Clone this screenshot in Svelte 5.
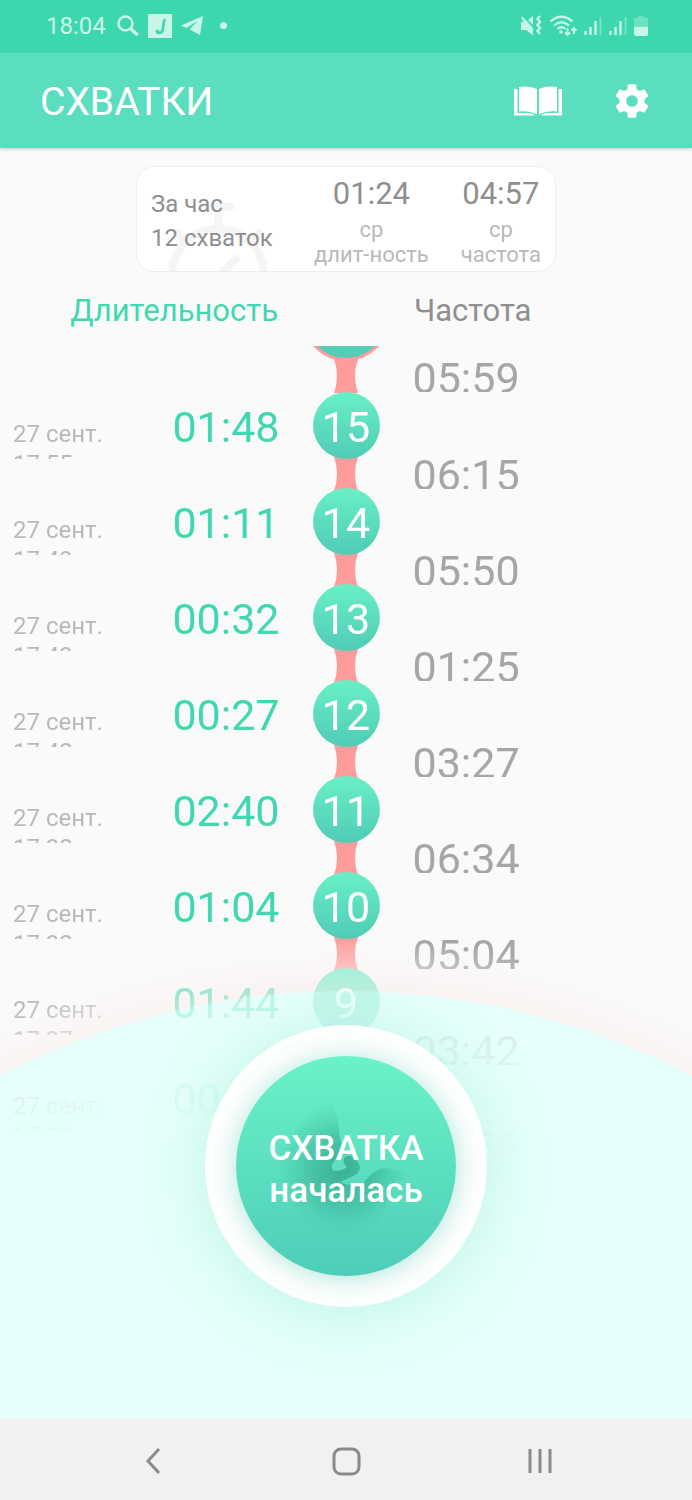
<script lang="ts">
type Contraction = {
	id: number;
	date?: string;
	duration?: string;
	frequency: string;
};

const contractions: Contraction[] = [
	{ id: 16, frequency: '05:59' },
	{ id: 15, date: '27 сент. 17:55', duration: '01:48', frequency: '06:15' },
	{ id: 14, date: '27 сент. 17:49', duration: '01:11', frequency: '05:50' },
	{ id: 13, date: '27 сент. 17:43', duration: '00:32', frequency: '01:25' },
	{ id: 12, date: '27 сент. 17:42', duration: '00:27', frequency: '03:27' },
	{ id: 11, date: '27 сент. 17:38', duration: '02:40', frequency: '06:34' },
	{ id: 10, date: '27 сент. 17:32', duration: '01:04', frequency: '05:04' },
	{ id: 9, date: '27 сент. 17:27', duration: '01:44', frequency: '03:42' },
	{ id: 8, date: '27 сент. 17:23', duration: '00:48', frequency: '05:56' },
];

const stats = [
	{ value: '01:24', label: 'длит-ность' },
	{ value: '04:57', label: 'частота' },
];
</script>

{#snippet signal()}
	<svg width="18" height="20" viewBox="0 0 18 20" aria-hidden="true">
		<path d="M1.5 15v4M6.5 11v8M11.5 5v14" stroke="currentColor" stroke-width="2.4" />
		<path d="M16.5 1v18" stroke="currentColor" stroke-width="2" opacity=".4" />
	</svg>
{/snippet}

<div class="screen">
	<div class="status-bar">
		<span class="clock">18:04</span>
		<svg width="24" height="24" viewBox="0 0 24 24" aria-hidden="true">
			<circle cx="9.5" cy="9.5" r="7" fill="none" stroke="currentColor" stroke-width="2.6" />
			<path d="M14.5 14.5l7 6.5" stroke="currentColor" stroke-width="3.6" />
		</svg>
		<svg width="24" height="24" viewBox="0 0 24 24" aria-hidden="true">
			<path fill="currentColor" d="M0 0h24v24H0z" />
			<path d="M17 5c-3 4 0 14-5.500 14-1.500 0-2-.500-2-1" fill="none" stroke="#3cd7af" stroke-width="2.600" />
			<circle cx="9.500" cy="17.500" r="2" fill="#3cd7af" />
		</svg>
		<svg width="24" height="22" viewBox="0 0 24 22" aria-hidden="true">
			<path fill="currentColor" d="M23 1L1 10.500l5.500 2.500L18 5.500 9.500 14.500 20 20z" />
		</svg>
		<span class="dot"></span>

		<div class="status-right">
			<svg width="22" height="22" viewBox="0 0 22 22" aria-hidden="true">
				<path fill="currentColor" d="M1 7h3L1 3l1.500-1.500L13 13v7.500L6 15H1zM8 5l5-4v9z" />
				<path d="M20 1l-2.500 3 2.500 3-2.500 3 2.500 3-2.500 3 2.500 3" fill="none" stroke="currentColor" stroke-width="2.400" />
			</svg>
			<svg width="28" height="22" viewBox="0 0 28 22" aria-hidden="true">
				<path d="M1.500 6.500q11-9.500 22 0M5 10.500q7.500-6.500 15 0M8.500 14q4-3.500 8 0" fill="none" stroke="currentColor" stroke-width="2.200" />
				<circle cx="12" cy="17" r="1.800" fill="currentColor" />
				<path d="M18.500 13v7M16 17.500l2.500 2.500 2.500-2.500M25 19v-6M22.500 15.500L25 13l2.500 2.500" fill="none" stroke="currentColor" stroke-width="1.800" />
			</svg>
			{@render signal()}
			{@render signal()}
			<svg width="14" height="20" viewBox="0 0 14 20" aria-hidden="true">
				<path d="M4 0h6v2h4v9H0V2h4z" fill="currentColor" opacity=".35" />
				<path d="M0 11h14v7q0 2-2 2H2q-2 0-2-2z" fill="currentColor" />
			</svg>
		</div>
	</div>

	<header class="app-bar">
		<h1>СХВАТКИ</h1>
		<button aria-label="Справка">
			<svg width="48" height="30" viewBox="0 0 48 30" fill="currentColor" aria-hidden="true">
				<path d="M5 1Q15-.500 23 3V28.500Q15 24.500 5 25.500z" />
				<path d="M43 1Q33-.500 25 3V28.500Q33 24.500 43 25.500z" />
				<path d="M0 3h3.500v24H14q5 0 7 2.500H0zM48 3h-3.500v24H34q-5 0-7 2.500h21z" />
			</svg>
		</button>
		<button aria-label="Настройки">
			<svg width="40" height="40" viewBox="0 0 24 24" fill="currentColor" aria-hidden="true">
				<path d="M19.430 12.980c.040-.320.070-.640.070-.980s-.030-.660-.070-.980l2.110-1.650c.190-.150.240-.420.120-.640l-2-3.460c-.120-.220-.390-.300-.610-.220l-2.490 1c-.520-.400-1.080-.730-1.690-.980l-.380-2.650C14.460 2.180 14.250 2 14 2h-4c-.250 0-.460.180-.490.420l-.380 2.650c-.610.250-1.170.590-1.690.980l-2.490-1c-.230-.090-.490 0-.610.220l-2 3.460c-.130.220-.070.490.120.640l2.110 1.650c-.040.320-.070.650-.070.980s.030.660.070.980l-2.110 1.650c-.190.150-.240.420-.120.640l2 3.460c.120.220.390.300.610.220l2.490-1c.520.400 1.080.730 1.690.980l.380 2.650c.030.240.240.420.490.420h4c.250 0 .460-.180.490-.420l.380-2.650c.610-.250 1.170-.590 1.690-.980l2.490 1c.230.090.490 0 .610-.220l2-3.460c.120-.220.070-.490-.120-.640l-2.110-1.650zM12 15.500c-1.930 0-3.500-1.570-3.500-3.500s1.570-3.500 3.500-3.500 3.500 1.570 3.500 3.500-1.570 3.500-3.500 3.500z" />
			</svg>
		</button>
	</header>

	<main>
		<div class="arc"></div>

		<section class="summary">
			<svg class="stopwatch" width="110" height="70" viewBox="0 0 110 70" aria-hidden="true">
				<g fill="none" stroke="#f5f5f5" stroke-width="8" stroke-linecap="round">
					<circle cx="55" cy="74" r="46" />
					<path d="M44 6h23M55 8v18M14 32l6 6M96 32l-6 6M73 58L55 76" />
				</g>
			</svg>
			<p class="total">За час<br />12 схваток</p>
			{#each stats as stat}
				<div class="stat">
					<strong>{stat.value}</strong>
					<span>ср<br />{stat.label}</span>
				</div>
			{/each}
		</section>

		<div class="columns">
			<h2 class="active">Длительность</h2>
			<h2>Частота</h2>
		</div>

		<div class="list">
			<ol>
				{#each contractions as item, i (item.id)}
					<li class:latest={i === 0}>
						<div class="left">
							{#if item.duration}
								<time>{item.date}</time>
								<span class="duration">{item.duration}</span>
							{/if}
						</div>
						<div class="track">
							<span class="node">{item.duration ? item.id : ''}</span>
							<svg viewBox="0 0 24 34" preserveAspectRatio="none" aria-hidden="true">
								<path d="M0 0h24Q18 17 24 34H0Q6 17 0 0z" fill="#ff9b9b" />
							</svg>
						</div>
						<span class="frequency">{item.frequency}</span>
					</li>
				{/each}
			</ol>
		</div>

		<button class="start">
			<span class="start-face">
				<svg class="baby" viewBox="0 0 220 220" aria-hidden="true">
					<defs>
						<radialGradient id="shade" gradientUnits="userSpaceOnUse" cx="108" cy="112" r="68">
							<stop offset="0" stop-color="#238f78" stop-opacity=".6" />
							<stop offset=".5" stop-color="#2c9c83" stop-opacity=".4" />
							<stop offset="1" stop-color="#3fb89c" stop-opacity="0" />
						</radialGradient>
					</defs>
					<path
						fill="url(#shade)"
						d="M94 42C101 56 103 68 104 82Q107 93 111 99Q104 98 99 104Q93 112 98 115Q107 115 111 111Q106 107 108 102Q114 96 121 105Q127 112 121 118Q114 122 104 126Q114 131 126 129Q138 112 150 112Q165 113 178 124Q162 121 151 132Q156 170 115 178Q66 178 52 142Q32 124 40 104Q66 58 94 42z"
					/>
				</svg>
				<span class="start-text">СХВАТКА<br />началась</span>
			</span>
		</button>
	</main>

	<nav class="system-nav">
		<button aria-label="Назад">
			<svg width="32" height="32" viewBox="0 0 32 32" aria-hidden="true">
				<path d="M22 5L11 17l11 12" />
			</svg>
		</button>
		<button aria-label="Главный экран">
			<svg width="32" height="32" viewBox="0 0 32 32" aria-hidden="true">
				<rect x="4" y="5" width="25" height="25" rx="7" />
			</svg>
		</button>
		<button aria-label="Последние приложения">
			<svg width="32" height="32" viewBox="0 0 32 32" aria-hidden="true">
				<path d="M7 5v24M17 5v24M27 5v24" />
			</svg>
		</button>
	</nav>
</div>

<style>
	:global(body) {
		margin: 0;
	}

	.screen {
		display: flex;
		flex-direction: column;
		min-height: 100vh;
		background: #fafafa;
		color: #8f8f8f;
		font-family: Roboto, 'Noto Sans', sans-serif;
	}

	button {
		padding: 0;
		border: none;
		background: none;
		color: inherit;
		font: inherit;
		cursor: pointer;
	}

	svg {
		display: block;
		flex-shrink: 0;
	}

	.status-bar {
		position: relative;
		z-index: 2;
		display: flex;
		align-items: center;
		gap: 8px;
		height: 53px;
		padding: 0 44px 2px 46px;
		box-sizing: border-box;
		background: #3cd7af;
		color: #c9f5e9;
	}

	.clock {
		margin-right: 2px;
		font-size: 24px;
	}

	.dot {
		width: 7px;
		height: 7px;
		margin-left: 8px;
		border-radius: 50%;
		background: currentColor;
	}

	.status-right {
		display: flex;
		align-items: center;
		gap: 7px;
		margin-left: auto;
	}

	.app-bar {
		display: flex;
		align-items: center;
		gap: 50px;
		height: 95px;
		padding: 0 40px;
		box-sizing: border-box;
		background: #5bdebf;
		color: #fff;
		box-shadow: 0 1px 4px rgba(0, 0, 0, 0.2);
		z-index: 1;
	}

	h1 {
		flex: 1;
		margin: 2px 0 0;
		font-size: 39px;
		font-weight: 400;
	}

	main {
		position: relative;
		display: flex;
		flex: 1;
		flex-direction: column;
		overflow: hidden;
	}

	/* only the top of this circle shows, behind the list */
	.arc {
		position: absolute;
		top: calc(100% - 428px);
		left: 50%;
		width: 1508px;
		height: 1508px;
		border-radius: 50%;
		background: #e6fffa;
		box-shadow: 0 0 60px rgba(255, 215, 210, 0.35);
		transform: translateX(-50%);
	}

	.summary {
		position: relative;
		display: flex;
		align-items: center;
		gap: 32px;
		width: 420px;
		max-width: 100%;
		height: 106px;
		margin: 18px auto 0;
		padding: 0 14px;
		box-sizing: border-box;
		overflow: hidden;
		border: 1px solid #eee;
		border-radius: 18px;
		background: #fff;
	}

	.stopwatch {
		position: absolute;
		bottom: 0;
		left: 26px;
	}

	.total {
		position: relative;
		flex: 1;
		margin: 4px 0 0;
		font-size: 24px;
		line-height: 34px;
	}

	.stat {
		display: flex;
		flex-direction: column;
		align-items: center;
		text-align: center;
	}

	.stat strong {
		font-size: 31px;
		font-weight: 400;
		line-height: 46px;
	}

	.stat span {
		color: #b9b9b9;
		font-size: 22px;
		line-height: 25px;
	}

	.columns {
		position: relative;
		display: grid;
		grid-template-columns: 1fr 1fr;
		column-gap: 136px;
		padding: 21px 0 17px;
	}

	h2 {
		margin: 0;
		font-size: 31px;
		font-weight: 400;
		line-height: 36px;
	}

	.columns .active {
		color: #40d8b0;
		text-align: right;
	}

	.list {
		position: relative;
		flex: 1;
		overflow: hidden;
		mask-image: radial-gradient(
			circle at 50% calc(100% + 326px),
			transparent 600px,
			rgba(0, 0, 0, 0.12) 700px,
			rgba(0, 0, 0, 0.26) 753px,
			rgba(0, 0, 0, 0.4) 755px,
			rgba(0, 0, 0, 0.6) 778px,
			#000 808px
		);
	}

	ol {
		margin: -73px 0 0;
		padding: 0;
		list-style: none;
	}

	li {
		display: grid;
		grid-template-columns: 1fr 67px 1fr;
		column-gap: 33px;
		height: 96px;
	}

	.left {
		display: flex;
		justify-content: space-between;
		padding-left: 13px;
	}

	time {
		width: 100px;
		height: 40px;
		margin-top: 27px;
		overflow: hidden;
		color: #b9b9b9;
		font-size: 24px;
		line-height: 30px;
	}

	.duration {
		color: #40d8b0;
		font-size: 43px;
		line-height: 70px;
	}

	.track {
		display: flex;
		flex-direction: column;
		align-items: center;
	}

	.track svg {
		width: 24px;
		height: 34px;
		margin: -2px 0;
	}

	.node {
		position: relative;
		z-index: 1;
		flex-shrink: 0;
		width: 67px;
		height: 67px;
		border-radius: 50%;
		background: linear-gradient(#68f0c6, #50ccb6);
		color: #fff;
		font-size: 43px;
		line-height: 70px;
		text-align: center;
	}

	.frequency {
		align-self: end;
		height: 40px;
		overflow: hidden;
		color: #a6a6a6;
		font-size: 43px;
		line-height: 52px;
	}

	.latest {
		height: 119px;
	}

	.latest .node {
		width: 82px;
		height: 82px;
		border: 3px solid #ff9b9b;
	}

	.start {
		position: absolute;
		bottom: 112px;
		left: 50%;
		display: flex;
		align-items: center;
		justify-content: center;
		width: 282px;
		height: 282px;
		overflow: hidden;
		border-radius: 50%;
		background: #fff;
		box-shadow: 0 4px 60px rgba(80, 220, 185, 0.28);
		transform: translateX(-50%);
	}

	.start-face {
		position: relative;
		display: flex;
		align-items: center;
		justify-content: center;
		width: 220px;
		height: 220px;
		border-radius: 50%;
		background: linear-gradient(#6af2c8, #4ecdb8);
		box-shadow: 0 2px 28px rgba(50, 190, 160, 0.4);
	}

	.baby {
		position: absolute;
		inset: 0;
	}

	.start-text {
		position: relative;
		padding-top: 8px;
		color: #fff;
		font-size: 35px;
		font-weight: 500;
		line-height: 42px;
	}

	.system-nav {
		display: flex;
		align-items: center;
		justify-content: space-around;
		height: 81px;
		padding: 0 56px;
		background: #f1f1f1;
	}

	.system-nav svg {
		fill: none;
		stroke: #8a8a8a;
		stroke-width: 3;
	}
</style>
